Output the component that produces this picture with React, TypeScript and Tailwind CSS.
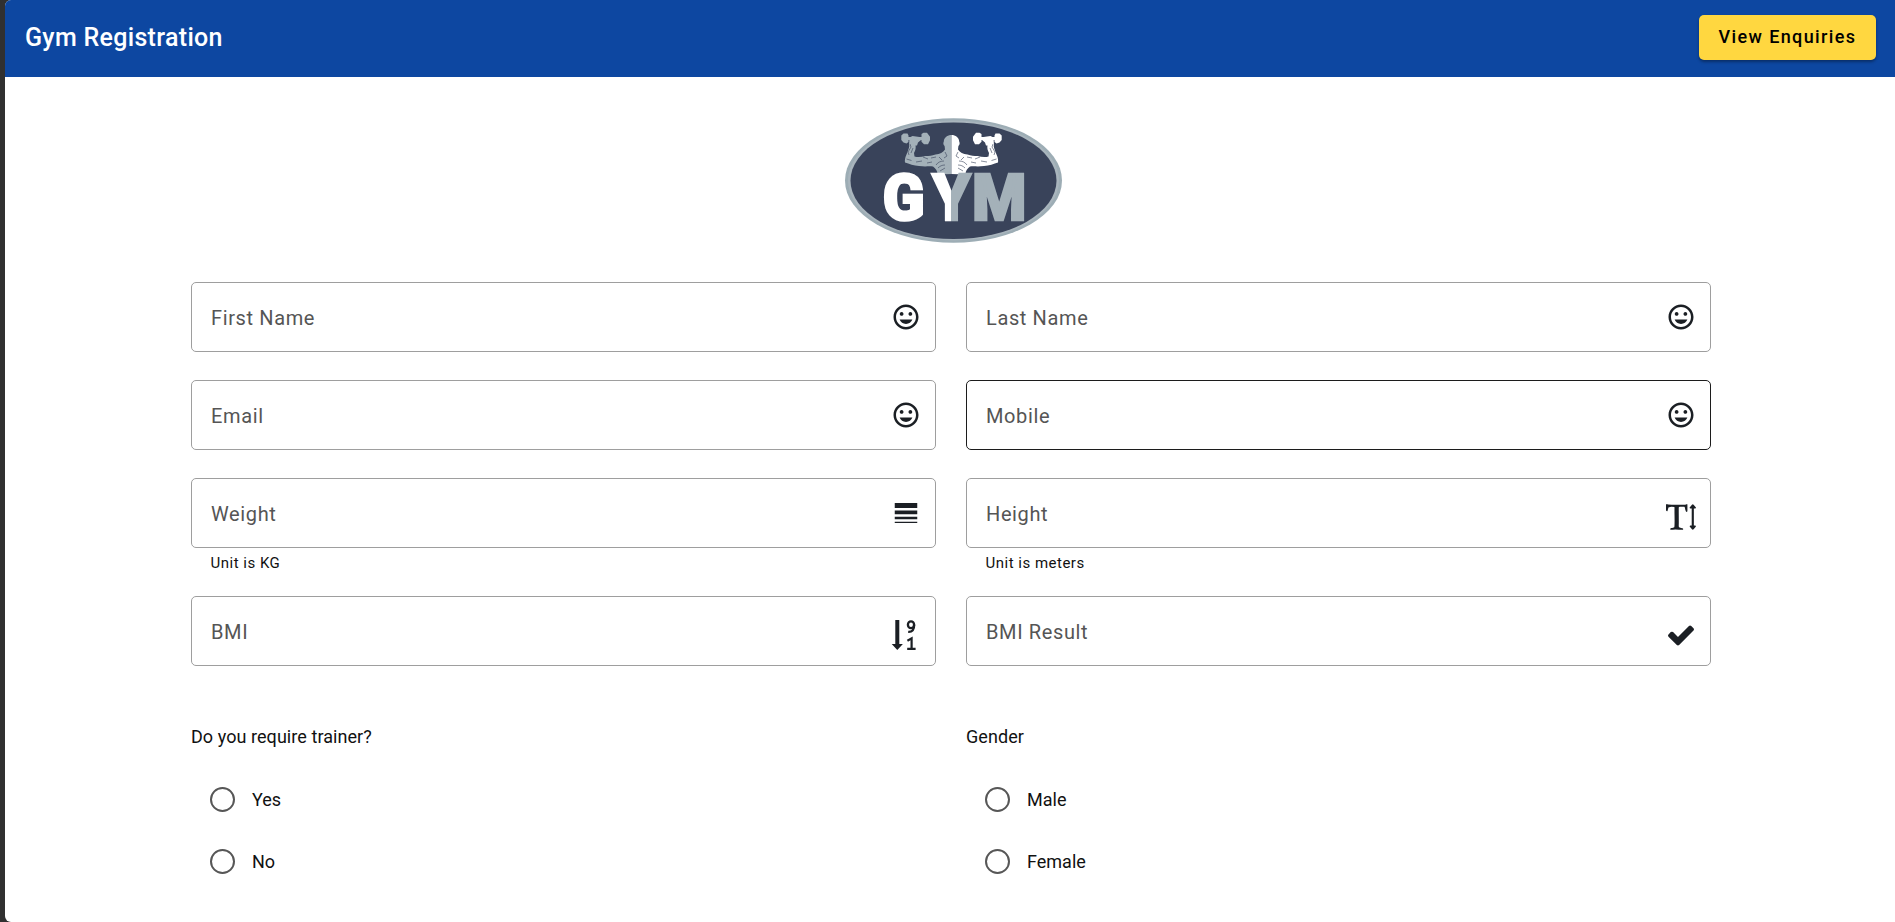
import React from "react";
import { MdLineWeight, MdMood } from "react-icons/md";

function TextHeightIcon() {
  return (
    <svg viewBox="0 0 1792 1792" className="size-[30px] fill-current">
      <path d="M1744 1408q33 0 42 18.5t-11 44.5l-126 162q-20 26-49 26t-49-26l-126-162q-20-26-11-44.5t42-18.5h80v-1024h-80q-33 0-42-18.5t11-44.5l126-162q20-26 49-26t49 26l126 162q20 26 11 44.5t-42 18.5h-80v1024h80zm-1663-1279l54 27q12 5 211 5 44 0 132-2t132-2q36 0 107.5.5t107.5.5h293q6 0 21 .5t20.5 0 16-3 17.5-9 15-17.5l42-1q4 0 14 .5t14 .5q2 112 2 336 0 80-5 109-39 14-68 18-25-44-54-128-3-9-11-48t-14.5-73.5-7.5-35.5q-6-8-12-12.5t-15.5-6-13-2.5-18-.5-16.5.5q-17 0-66.5-.5t-74.5-.5-64 2-71 6q-9 81-8 136 0 94 2 388t2 455q0 16-2.5 71.5t0 91.5 12.5 69q40 21 124 42.5t120 37.5q5 40 5 50 0 14-3 29l-34 1q-76 2-218-8t-207-10q-50 0-151 9t-152 9q-3-51-3-52v-9q17-27 61.5-43t98.5-29 78-27q19-42 19-383 0-101-3-303t-3-303v-117q0-2 .5-15.5t.5-25-1-25.5-3-24-5-14q-11-12-162-12-33 0-93 12t-80 26q-19 13-34 72.5t-31.5 111-42.5 53.5q-42-26-56-44v-383z" />
    </svg>
  );
}

function SortDescIcon() {
  return (
    <svg viewBox="0 0 30 30" className="size-[30px]" fill="none" stroke="currentColor">
      <path d="M4.300 0h4v24h3.600L6.300 30 0.700 24h3.600z" fill="currentColor" stroke="none" />
      <ellipse cx="20" cy="4.800" rx="3.100" ry="3.400" strokeWidth="2.300" />
      <path d="M23.200 4.800c0 4.800-1.800 7.200-6 7" strokeWidth="2.300" />
      <path d="M16.400 20.700l4.200-2.400v10.200M16.200 28.800h8.400" strokeWidth="2.200" />
    </svg>
  );
}

function CheckIcon() {
  return (
    <svg viewBox="0 0 1792 1792" className="size-[30px] fill-current">
      <path d="M1671 566q0 40-28 68l-724 724-136 136q-28 28-68 28t-68-28l-136-136-362-362q-28-28-28-68t28-68l136-136q28-28 68-28t68 28l294 295 656-657q28-28 68-28t68 28l136 136q28 28 28 68z" />
    </svg>
  );
}

function HalfFigure({ color }: { color: string }) {
  return (
    <g>
      <path
        d="M116.500 25c-4 0-7.500 2.500-7.700 6.500-.8 1.500-.5 3.500.8 4.500l.4 3.500c-2 3-5 4.500-9.500 5-3.500 1-6.500 1.500-10 1.500-4 1-7.500 1.500-11 .5l-.5-3.500c1.500-2.500 2-5 1.500-8h-6c-.5 4-2.500 8-4 12-.5 2-.8 3.500-.5 5.500 4 1.500 9 3 14 3.500 6 .8 10 0 14 .5 2.500 2 4.500 4 4.500 8l14-.5z"
        fill={color}
      />
      <path d="M74.500 27.500l3-1.500 7 1 1.500 3-3 2.500-1 3h-8z" fill={color} />
      <path d="M66.300 25.500l2.200-2h4l1 2v6.500l-2 1.500-3-1-2.200-2.500zM86.500 24l2-1.300h3.500l3 4v3.500l-2 4h-4l-2.500-2.500z" fill={color} />
      <path d="M72 27h16v3H72z" fill={color} />
      <path
        d="M75 34l1 3-3 5 1 3M78 38l-2 5M71.500 49l5 1.500M81 52l6-1M88 47l5 2M92 53l5-1M96 48l5-1M101 55c2-3 5-4 8-4M103 58c2-2 4-3 7-3M105 61l5-3M110 42l2 4-3 2M104 47l3 3"
        stroke="#39435a"
        strokeWidth="0.800"
        fill="none"
        opacity="0.750"
      />
    </g>
  );
}

function GymLogo() {
  return (
    <svg viewBox="0 0 240 140" className="h-[140px] w-[240px]">
      <defs>
        <linearGradient id="split" gradientUnits="userSpaceOnUse" x1="96" y1="0" x2="137" y2="0">
          <stop offset="0.500" stopColor="#fff" />
          <stop offset="0.500" stopColor="#a4b1b9" />
        </linearGradient>
      </defs>
      <ellipse cx="118.500" cy="70.500" rx="108.500" ry="62.300" fill="#9dadb5" />
      <ellipse cx="118.500" cy="70.500" rx="105.500" ry="60" fill="#a9b5bd" />
      <ellipse cx="118.500" cy="70.700" rx="103" ry="58.300" fill="#39435a" />
      <HalfFigure color="#a4b1b9" />
      <g transform="translate(233 0) scale(-1 1)">
        <HalfFigure color="#fff" />
      </g>
      <g className="font-[Roboto] font-black" fontSize="64" strokeWidth="2.600">
        <text x="47.700" y="109.700" fill="#fff" stroke="#fff" textLength="41.800" lengthAdjust="spacingAndGlyphs">G</text>
        <text x="97.300" y="109.700" fill="url(#split)" stroke="url(#split)" textLength="38.400" lengthAdjust="spacingAndGlyphs">Y</text>
        <text x="137.300" y="109.700" fill="#a4b1b9" stroke="#a4b1b9" textLength="54" lengthAdjust="spacingAndGlyphs">M</text>
      </g>
    </svg>
  );
}

type FieldProps = { label: string; icon: React.ReactNode; hint?: string; active?: boolean };

function Field({ label, icon, hint, active }: FieldProps) {
  return (
    <div>
      <div
        className={`flex h-[70px] items-center justify-between rounded-[5px] border pl-[19px] pr-[14px] ${
          active ? "border-[#1c1c1c]" : "border-[#9e9e9e]"
        }`}
      >
        <span className="pt-[2px] text-[20px] leading-[30px] tracking-[0.625px] text-[#555]">{label}</span>
        <span className="text-[#1b1f24]">{icon}</span>
      </div>
      {hint && <p className="h-[20px] pl-[19.500px] pt-[4px] text-[15px] leading-[22px] tracking-[0.5px]">{hint}</p>}
    </div>
  );
}

function RadioSet({ title, options }: { title: string; options: string[] }) {
  return (
    <div>
      <p className="text-[18px] leading-[26px] tracking-[0.06px]">{title}</p>
      <div className="mt-[18px]">
        {options.map((option) => (
          <label key={option} className="flex h-[62.500px] items-center pl-[19px]">
            <span className="size-[25px] rounded-full border-2 border-[#575757]" />
            <span className="ml-[17px] text-[18px]">{option}</span>
          </label>
        ))}
      </div>
    </div>
  );
}

export default function App() {
  const mood = <MdMood size={30} />;
  return (
    <div className="h-[922px] overflow-hidden bg-[#303030] pl-[5px] font-[Roboto,sans-serif] text-[#111]">
      <div className="h-full overflow-hidden rounded-l-[6px] bg-white">
        <header className="flex h-[77px] items-center justify-between bg-[#0d47a1] pl-[20px] pr-[19px] pb-[2px]">
          <h1 className="text-[25px] font-medium tracking-[0.312px] text-white">Gym Registration</h1>
          <button className="h-[45px] w-[177px] rounded-[5px] bg-[#ffd740] pb-[2px] text-[18px] font-medium tracking-[1.380px] text-black shadow-[0_2px_3px_rgba(0,0,0,0.350)]">
            View Enquiries
          </button>
        </header>
        <main className="pl-[186px] pr-[184px]">
          <div className="flex h-[205px] pl-[644px] pt-[33px]">
            <GymLogo />
          </div>
          <div className="grid grid-cols-2 gap-x-[30px] gap-y-[28px]">
            <Field label="First Name" icon={mood} />
            <Field label="Last Name" icon={mood} />
            <Field label="Email" icon={mood} />
            <Field label="Mobile" icon={mood} active />
            <Field label="Weight" icon={<MdLineWeight size={30} />} hint="Unit is KG" />
            <Field label="Height" icon={<div className="pt-[8px]"><TextHeightIcon /></div>} hint="Unit is meters" />
            <Field label="BMI" icon={<div className="pt-[8px]"><SortDescIcon /></div>} />
            <Field label="BMI Result" icon={<div className="pt-[8px]"><CheckIcon /></div>} />
          </div>
          <div className="mt-[58px] grid grid-cols-2 gap-x-[30px]">
            <RadioSet title="Do you require trainer?" options={["Yes", "No"]} />
            <RadioSet title="Gender" options={["Male", "Female"]} />
          </div>
        </main>
      </div>
    </div>
  );
}
